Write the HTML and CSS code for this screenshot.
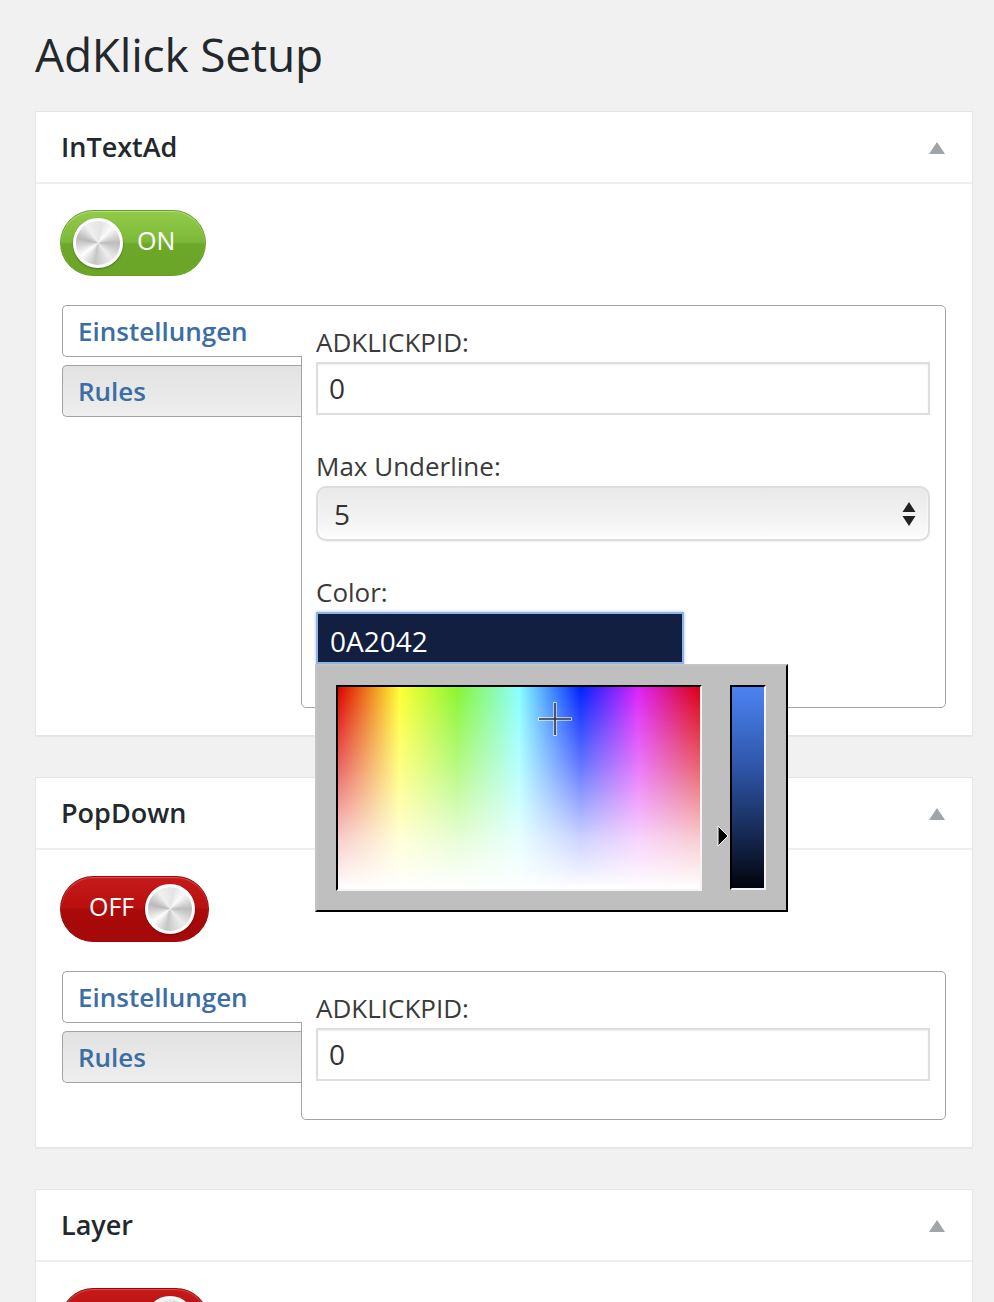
FILE: index.html
```html
<!DOCTYPE html>
<html lang="de">
<head>
<meta charset="utf-8">
<title>AdKlick Setup</title>
<link rel="stylesheet" href="styles.css">
</head>
<body>
<div class="wrap">
  <h1 class="page-title">AdKlick Setup</h1>

  <div class="postbox">
    <div class="postbox-head">
      <h2>InTextAd</h2>
      <span class="toggle-indicator"></span>
    </div>
    <div class="postbox-body">
      <div class="switch switch-on"><span class="knob"></span><span class="switch-label">ON</span></div>
      <div class="tabs">
        <ul class="tab-nav">
          <li class="tab active">Einstellungen</li>
          <li class="tab">Rules</li>
        </ul>
        <div class="tab-panel">
          <div class="field">
            <label class="field-label">ADKLICKPID:</label>
            <div class="text-input">0</div>
          </div>
          <div class="field">
            <label class="field-label">Max Underline:</label>
            <div class="select">
              <span>5</span>
              <svg class="select-arrows" width="14" height="26" viewBox="0 0 14 26"><path d="M7 1 L13.5 11 L0.5 11 Z M0.5 15 L13.5 15 L7 25 Z" fill="#222"/></svg>
            </div>
          </div>
          <div class="field">
            <label class="field-label">Color:</label>
            <div class="color-wrap">
              <div class="color-input">0A2042</div>
              <div class="picker">
                <div class="spectrum">
                  <svg class="crosshair" width="36" height="36" viewBox="0 0 36 36">
                    <path d="M18 1 V35 M1 18 H35" stroke="#fff" stroke-width="3.5" opacity="0.7"/>
                    <path d="M18 2 V34 M2 18 H34" stroke="#333" stroke-width="1.6"/>
                  </svg>
                </div>
                <div class="slider">
                  <svg class="slider-arrow" width="12" height="22" viewBox="0 0 12 22"><path d="M1 1 L11 11 L1 21 Z" fill="#000" stroke="#fff" stroke-width="1"/></svg>
                </div>
              </div>
            </div>
          </div>
        </div>
      </div>
    </div>
  </div>

  <div class="postbox">
    <div class="postbox-head">
      <h2>PopDown</h2>
      <span class="toggle-indicator"></span>
    </div>
    <div class="postbox-body">
      <div class="switch switch-off"><span class="switch-label">OFF</span><span class="knob"></span></div>
      <div class="tabs">
        <ul class="tab-nav">
          <li class="tab active">Einstellungen</li>
          <li class="tab">Rules</li>
        </ul>
        <div class="tab-panel tab-panel-short">
          <div class="field">
            <label class="field-label">ADKLICKPID:</label>
            <div class="text-input">0</div>
          </div>
        </div>
      </div>
    </div>
  </div>

  <div class="postbox">
    <div class="postbox-head">
      <h2>Layer</h2>
      <span class="toggle-indicator"></span>
    </div>
    <div class="postbox-body">
      <div class="switch switch-off"><span class="switch-label">OFF</span><span class="knob"></span></div>
    </div>
  </div>
</div>
</body>
</html>
```

FILE: styles.css
```css
* { box-sizing: border-box; }

html, body {
  margin: 0;
  padding: 0;
  background: #f1f1f1;
  font-family: "Open Sans", "Noto Sans", "Liberation Sans", sans-serif;
  color: #333;
}

.wrap {
  padding: 24px 21px 0 35px;
}

.page-title {
  margin: 0 0 27px 0;
  font-size: 46px;
  line-height: 60px;
  font-weight: 400;
  color: #23282d;
  letter-spacing: -0.2px;
}

.postbox {
  background: #fff;
  border: 1px solid #e5e5e5;
  box-shadow: 0 1px 1px rgba(0,0,0,0.04);
  margin-bottom: 41px;
}

.postbox-head {
  display: flex;
  align-items: center;
  justify-content: space-between;
  height: 72px;
  padding: 0 27px 0 25px;
  border-bottom: 2px solid #eeeeee;
}

.postbox-head h2 {
  margin: 0;
  font-size: 27px;
  line-height: 70px;
  font-weight: 600;
  color: #23282d;
}

.toggle-indicator {
  width: 0;
  height: 0;
  border-left: 8px solid transparent;
  border-right: 8px solid transparent;
  border-bottom: 12px solid #a0a5aa;
  margin-top: 1px;
}

.postbox-body {
  padding: 26px 26px 27px 24px;
}

/* switches */
.switch {
  display: flex;
  align-items: center;
  height: 66px;
  border-radius: 33px;
  color: #fff;
  font-size: 25px;
  line-height: 30px;
}

.switch-label {
  padding-bottom: 6px;
}

.switch-on {
  width: 146px;
  padding-left: 12px;
  background: linear-gradient(#92cb48 0%, #7db939 48%, #6ea82b 52%, #6aa527 100%);
  border: 1px solid #68a227;
  box-shadow: inset 0 1px 1px rgba(255,255,255,0.35);
}

.switch-on .switch-label { margin-left: 14px; }

.switch-off {
  width: 149px;
  padding-left: 28px;
  background: linear-gradient(#c61a1a 0%, #b80f0f 48%, #a90a0a 52%, #a50909 100%);
  border: 1px solid #9a0808;
  box-shadow: inset 0 1px 1px rgba(255,255,255,0.25);
}

.switch-off .switch-label { margin-right: 11px; }

.knob {
  width: 50px;
  height: 50px;
  border-radius: 50%;
  border: 3px solid #fff;
  background: conic-gradient(from 10deg, #e4e4e4, #fbfbfb 9%, #bdbdbd 22%, #ededed 36%, #c6c6c6 50%, #fefefe 62%, #b9b9b9 76%, #f0f0f0 88%, #e4e4e4);
  box-shadow: 0 1px 2px rgba(0,0,0,0.35);
  flex: none;
}

/* tabs */
.tabs {
  display: flex;
  margin: 29px 0 0 2px;
}

.tab-nav {
  list-style: none;
  margin: 0;
  padding: 0;
  width: 239px;
  flex: none;
  display: flex;
  flex-direction: column;
  gap: 8px;
}

.tab {
  height: 52px;
  padding-left: 15px;
  font-size: 26px;
  line-height: 50px;
  font-weight: 600;
  color: #3a6ea5;
  border: 1px solid #a3a3a3;
  border-right: none;
  border-radius: 5px 0 0 5px;
  background: linear-gradient(#e2e2e2, #eeeeee);
}

.tab.active {
  background: #fff;
  width: 240px;
  position: relative;
  z-index: 1;
}

.tab-panel {
  flex: 1;
  border: 1px solid #a3a3a3;
  border-radius: 0 5px 5px 5px;
  padding: 18px 15px 43px 14px;
  display: flex;
  flex-direction: column;
  gap: 33px;
}

.tab-panel-short {
  padding-bottom: 38px;
}

.field-label {
  display: block;
  font-size: 26px;
  line-height: 36px;
  color: #3a3a3a;
  margin-bottom: 2px;
}

.text-input {
  height: 53px;
  border: 2px solid #dedede;
  box-shadow: inset 0 1px 2px rgba(0,0,0,0.07);
  padding-left: 11px;
  font-size: 28px;
  line-height: 48px;
  color: #333;
  background: #fff;
}

.select {
  height: 55px;
  border: 2px solid #dddddd;
  border-radius: 10px;
  background: linear-gradient(#e9e9e9 0%, #f2f2f2 55%, #fcfcfc 100%);
  box-shadow: inset 0 -2px 3px rgba(255,255,255,0.9), 0 1px 1px rgba(0,0,0,0.05);
  display: flex;
  align-items: center;
  justify-content: space-between;
  padding: 0 12px 0 16px;
  font-size: 28px;
  color: #333;
}

.select-arrows { display: block; }

.color-wrap {
  position: relative;
  width: 368px;
}

.color-input {
  height: 52px;
  background: #121f40;
  border: 2px solid #8fb4e3;
  box-shadow: 0 0 3px rgba(90,150,230,0.6);
  padding: 3px 0 0 12px;
  font-size: 28px;
  line-height: 48px;
  color: #fff;
}

.picker {
  position: absolute;
  left: -1px;
  top: 52px;
  z-index: 5;
  width: 473px;
  height: 248px;
  background: #bfbfbf;
  border-style: solid;
  border-width: 2px;
  border-color: #c4c4c4 #000 #000 #c4c4c4;
  padding: 19px 20px 19px 19px;
  display: flex;
  align-items: flex-start;
}

.spectrum {
  position: relative;
  width: 366px;
  height: 206px;
  border-style: solid;
  border-width: 2px;
  border-color: #000 #f4f4f4 #f4f4f4 #000;
  background:
    linear-gradient(to bottom, rgba(255,255,255,0) 0%, rgba(255,255,255,0.4) 40%, rgba(255,255,255,0.8) 75%, #fff 100%),
    linear-gradient(to right, #dd0000 0%, #ffff33 17%, #88f533 33%, #88ffff 50%, #0022ff 67%, #dd22f8 83%, #dd0010 100%);
}

.crosshair {
  position: absolute;
  left: 199px;
  top: 14px;
}

.slider {
  position: relative;
  margin-left: 28px;
  width: 36px;
  height: 205px;
  border-style: solid;
  border-width: 2px;
  border-color: #000 #f4f4f4 #f4f4f4 #000;
  background: linear-gradient(#4c83f2 0%, #2e55a8 40%, #15274f 75%, #02040c 100%);
}

.slider-arrow {
  position: absolute;
  left: -15px;
  top: 138px;
}
```
